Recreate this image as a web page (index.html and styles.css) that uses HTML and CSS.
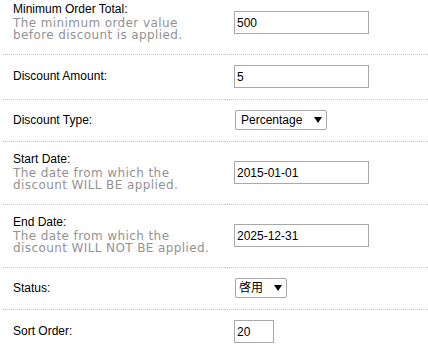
FILE: index.html
```html
<!DOCTYPE html>
<html>
<head>
<meta charset="utf-8">
<link rel="stylesheet" href="styles.css">
</head>
<body>
<table class="form">
  <tr>
    <td class="label-cell"><span class="label">Minimum Order Total:</span><span class="help">The minimum order value<br>before discount is applied.</span></td>
    <td><input class="text" type="text" value="500"></td>
  </tr>
  <tr>
    <td class="label-cell"><span class="label">Discount Amount:</span></td>
    <td><input class="text" type="text" value="5"></td>
  </tr>
  <tr>
    <td class="label-cell"><span class="label">Discount Type:</span></td>
    <td><span class="select-wrap"><select class="select select-type"><option>Percentage</option><option>Fixed Amount</option></select></span></td>
  </tr>
  <tr>
    <td class="label-cell"><span class="label">Start Date:</span><span class="help">The date from which the<br>discount WILL BE applied.</span></td>
    <td><input class="text" type="text" value="2015-01-01"></td>
  </tr>
  <tr>
    <td class="label-cell"><span class="label">End Date:</span><span class="help">The date from which the<br>discount WILL NOT BE applied.</span></td>
    <td><input class="text" type="text" value="2025-12-31"></td>
  </tr>
  <tr>
    <td class="label-cell"><span class="label">Status:</span></td>
    <td><span class="select-wrap"><select class="select select-status"><option>啓用</option><option>停用</option></select></span></td>
  </tr>
  <tr>
    <td class="label-cell"><span class="label">Sort Order:</span></td>
    <td><input class="text text-short" type="text" value="20"></td>
  </tr>
</table>
</body>
</html>
```
FILE: styles.css
```css
body {
  margin: 0;
  background: #fff;
  color: #000;
  font-family: "Liberation Sans", Arial, "Noto Sans CJK TC", sans-serif;
  font-size: 12px;
}

.form {
  border-collapse: collapse;
  margin: -8px 0 0 3px;
  width: calc(100% - 3px);
}

.form td {
  padding: 10px 10px 11px;
  border-bottom: 1px dotted #c4c4c4;
  vertical-align: middle;
}

.form .label-cell {
  width: 201px;
}

.label {
  display: block;
  line-height: 15px;
}

.help {
  display: block;
  font-family: "DejaVu Sans", Verdana, sans-serif;
  font-size: 12px;
  line-height: 12px;
  letter-spacing: 0.4px;
  color: #939393;
  margin-bottom: 2px;
}

.text {
  box-sizing: border-box;
  width: 135px;
  height: 23px;
  margin: 0;
  padding: 0 2px;
  border: 1px solid #a9a9a9;
  background: #fff;
  color: #000;
  font: 12px "Liberation Sans", Arial, sans-serif;
  vertical-align: middle;
}

.text-short {
  width: 40px;
}

.select-wrap {
  position: relative;
  display: inline-block;
  vertical-align: middle;
  margin-left: 1px;
}

.select {
  -webkit-appearance: none;
  appearance: none;
  box-sizing: border-box;
  height: 20px;
  margin: 0;
  padding: 0 0 0 5px;
  border: 1px solid #a9a9a9;
  border-radius: 2px;
  background: #fff;
  color: #000;
  font: 12px "Liberation Sans", Arial, "Noto Sans CJK TC", sans-serif;
  display: block;
}

.select-type {
  width: 92px;
}

.select-status {
  width: 52px;
  padding-left: 3px;
}

.select-wrap::after {
  content: "";
  position: absolute;
  right: 5px;
  top: 7px;
  border-left: 4px solid transparent;
  border-right: 4px solid transparent;
  border-top: 6px solid #000;
  pointer-events: none;
}
```
